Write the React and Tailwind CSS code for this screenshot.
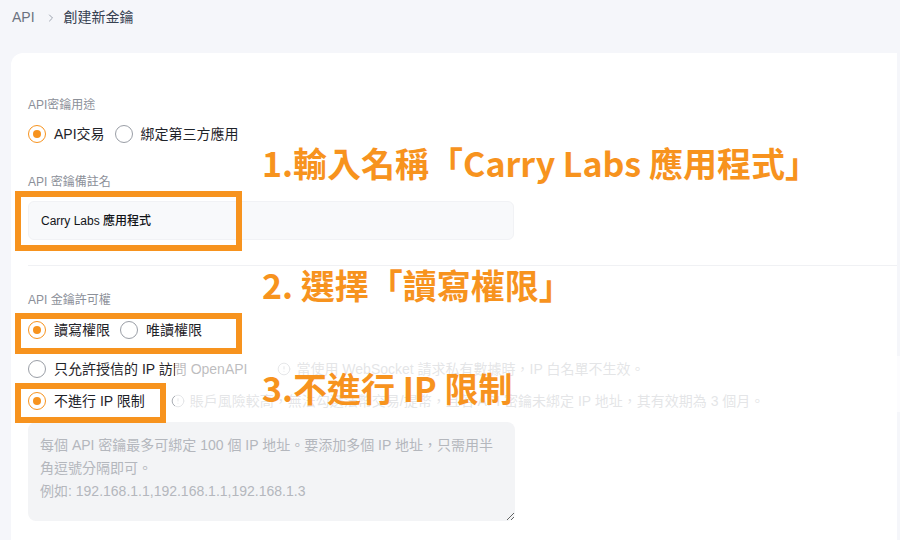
import { ChevronRight, CircleAlert } from "lucide-react";

const Radio = ({ checked, label }) => (
  <label className="flex items-center gap-2 text-[14px] text-[#1f2329]">
    {checked ? (
      <span className="w-[18px] h-[18px] rounded-full border-[1.5px] border-[#f7931e] flex items-center justify-center">
        <span className="w-[8px] h-[8px] rounded-full bg-[#f7931e]" />
      </span>
    ) : (
      <span className="w-[18px] h-[18px] rounded-full border-[1.5px] border-[#9a9ea6]" />
    )}
    <span>{label}</span>
  </label>
);

const Hint = ({ children }) => (
  <span className="flex items-center gap-[5px] text-[14px] text-[#a3a7ae]">
    <CircleAlert size={14} strokeWidth={1.6} />
    {children}
  </span>
);

export default function App() {
  return (
    <div className="relative w-[900px] h-[540px] overflow-hidden bg-[#f5f6fa] font-['Liberation_Sans','Noto_Sans_CJK_TC',sans-serif]">
      {/* breadcrumb */}
      <div className="h-[35px] flex items-center pl-3 text-[14px]">
        <span className="text-[#6b7280]">API</span>
        <ChevronRight size={12} className="ml-[10px] mr-[7px] text-[#9ca3af]" />
        <span className="text-[#374151]">創建新金鑰</span>
      </div>

      {/* card */}
      <div className="mt-[18px] ml-[11px] w-[886px] h-[600px] bg-white rounded-tl-xl pl-[17px] pt-[44px]">
        <div className="h-[17px] leading-[17px] text-[12px] text-[#8c9099]">API密鑰用途</div>
        <div className="mt-[10px] h-[20px] flex items-center gap-[10px]">
          <Radio checked label="API交易" />
          <Radio label="綁定第三方應用" />
        </div>

        <div className="mt-[30px] h-[17px] leading-[17px] text-[12px] text-[#8c9099]">API 密鑰備註名</div>
        <div className="mt-[10px] w-[486px] h-[39px] rounded-md bg-[#f8f9fb] border border-[#f1f2f5] flex items-center px-3">
          <span className="text-[12px] font-medium text-[#111418]">Carry Labs 應用程式</span>
        </div>

        <div className="mt-[25px] h-px bg-[#f0f1f4]" />

        <div className="mt-[26px] h-[17px] leading-[17px] text-[12px] text-[#8c9099]">API 金鑰許可權</div>
        <div className="mt-[11px] h-[20px] flex items-center gap-[10px]">
          <Radio checked label="讀寫權限" />
          <Radio label="唯讀權限" />
        </div>

        <div className="mt-[19px] h-[20px] flex items-center gap-[30px]">
          <Radio label="只允許授信的 IP 訪問 OpenAPI" />
          <Hint>當使用 WebSocket 請求私有數據時，IP 白名單不生效。</Hint>
        </div>
        <div className="mt-[12px] h-[20px] flex items-center gap-[26px]">
          <Radio checked label="不進行 IP 限制" />
          <Hint>賬戶風險較高，無法勾選法幣交易/提幣，且若 API 密鑰未綁定 IP 地址，其有效期為 3 個月。</Hint>
        </div>

        <textarea
          className="mt-[11px] block w-[487px] h-[99px] rounded-lg bg-[#f3f4f6] px-3 pt-[12px] text-[14px] leading-[23px] text-[#1f2329] placeholder:text-[#b4b7bd] outline-none"
          placeholder={"每個 API 密鑰最多可綁定 100 個 IP 地址。要添加多個 IP 地址，只需用半角逗號分隔即可。\n例如: 192.168.1.1,192.168.1.1,192.168.1.3"}
        />
      </div>

      {/* annotation overlay */}
      <div className="absolute left-[175px] top-[356px] w-[725px] h-[56px] bg-white/70" />

      <div className="absolute left-[15px] top-[191px] w-[227px] h-[60px] border-[6px] border-[#f7931e]" />
      <div className="absolute left-[15px] top-[313px] w-[227px] h-[41px] border-[6px] border-[#f7931e]" />
      <div className="absolute left-[15px] top-[383px] w-[151px] h-[40px] border-[6px] border-[#f7931e]" />

      <div className="absolute left-[262px] top-[143px] text-[34px] leading-[40px] font-bold text-[#f7931e] whitespace-nowrap font-['Noto_Sans_CJK_TC',sans-serif]">
        1.輸入名稱「Carry Labs 應用程式」
      </div>
      <div className="absolute left-[262px] top-[265px] text-[34px] leading-[40px] font-bold text-[#f7931e] whitespace-nowrap font-['Noto_Sans_CJK_TC',sans-serif]">
        2. 選擇「讀寫權限」
      </div>
      <div className="absolute left-[262px] top-[368px] text-[34px] leading-[40px] font-bold text-[#f7931e] whitespace-nowrap font-['Noto_Sans_CJK_TC',sans-serif]">
        3.不進行 IP 限制
      </div>
    </div>
  );
}
